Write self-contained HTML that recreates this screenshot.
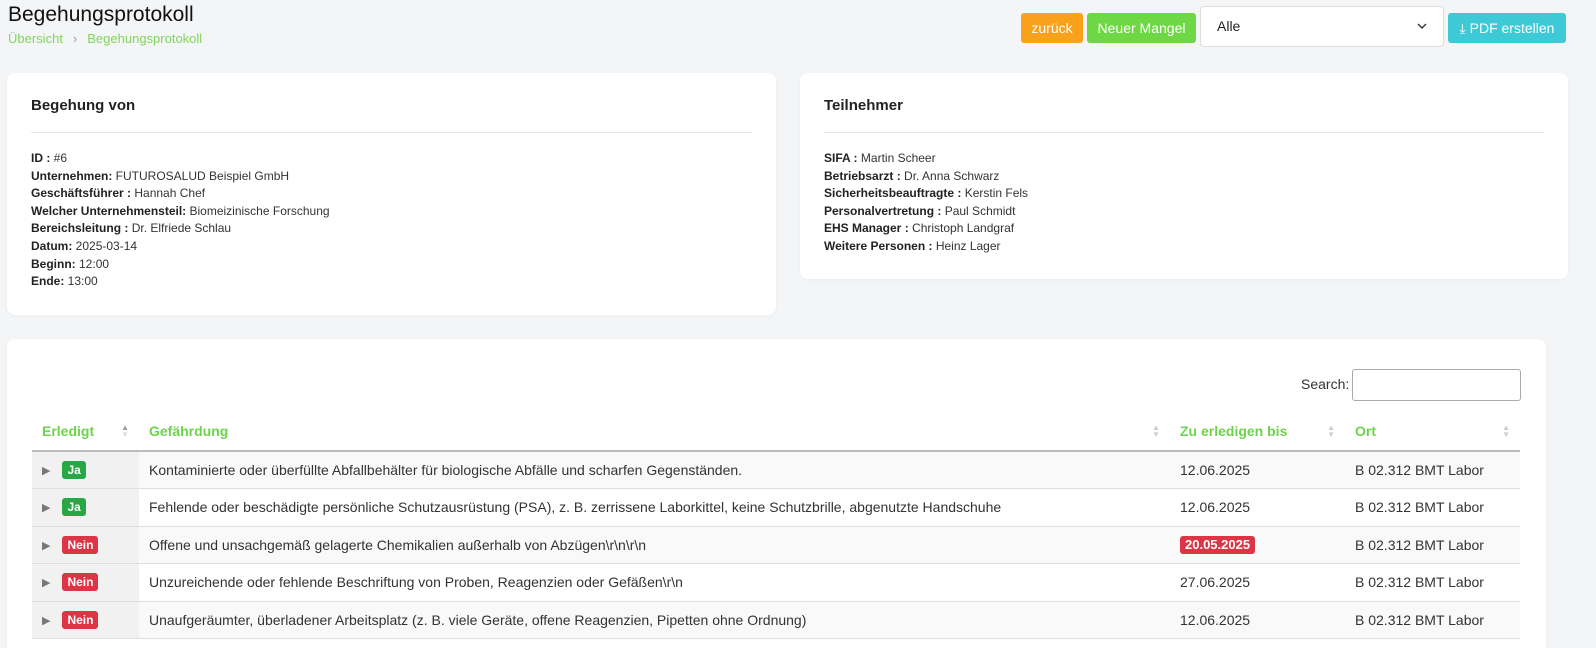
<!DOCTYPE html>
<html style="overflow:hidden"><head><meta charset="utf-8"><style>
*{box-sizing:border-box}
html,body{overflow:hidden}
body{margin:0;width:1596px;height:648px;background:#f4f5f7;font-family:"Liberation Sans",sans-serif;color:#333;position:relative}
.abs{position:absolute}
h1{position:absolute;left:8px;top:3px;margin:0;font-size:21px;font-weight:normal;color:#111}
.bc{left:8px;top:31px;font-size:13px;color:#7fd65a}
.bc span{color:#999;margin:0 10px}
.btn{position:absolute;top:13px;height:30px;border-radius:3px;color:#fff;font-size:14px;line-height:30px;text-align:center}
.card{position:absolute;background:#fff;border-radius:8px;box-shadow:0 1px 4px rgba(0,0,0,.04)}
.ct{position:absolute;left:24px;top:24px;font-size:15px;font-weight:bold;color:#222}
.hr{position:absolute;left:24px;right:24px;top:59px;border-top:1px solid #e8e8e8}
.lines{position:absolute;left:24px;top:77px;font-size:12px;line-height:17.6px;color:#333}
.lines b{color:#222}
table{position:absolute;left:32px;top:412px;width:1488px;border-collapse:collapse;font-size:14px}
th{color:#6cd44a;text-align:left;height:39px;padding:0 10px;border-bottom:2px solid #bbb;position:relative;font-size:14px}
th i{position:absolute;right:10px;top:12px;font-style:normal;font-size:8px;line-height:7px;color:#ccc}
td{height:37.5px;padding:0 10px;border-bottom:1px solid #ddd;color:#333}
tr.o td{background:#f9f9f9}
td.s{background:#f1f1f1!important;color:#777;font-size:11px}
.b{display:inline-block;color:#fff;font-weight:bold;font-size:12px;border-radius:3px;padding:2px 5px;margin-left:12px;line-height:14px}
.g{background:#28a745}.r{background:#dc3545}
</style></head><body>
<h1>Begehungsprotokoll</h1>
<div class="abs bc">Übersicht<span>›</span>Begehungsprotokoll</div>
<div class="btn" style="left:1021px;width:62px;background:#f9a11b">zurück</div>
<div class="btn" style="left:1087px;width:109px;background:#6dd744">Neuer Mangel</div>
<div class="abs" style="left:1200px;top:6px;width:244px;height:41px;background:#fff;border:1px solid #ddd;border-radius:4px;font-size:14px;line-height:39px;padding-left:16px;color:#222">Alle<svg class="abs" style="right:16px;top:16px" width="10" height="7" viewBox="0 0 10 7"><path d="M1 1l4 4 4-4" stroke="#333" stroke-width="1.4" fill="none"/></svg></div>
<div class="btn" style="left:1448px;width:118px;background:#3ec9d6">⤓ PDF erstellen</div>

<div class="card" style="left:7px;top:73px;width:769px;height:242px">
<div class="ct">Begehung von</div><div class="hr"></div>
<div class="lines"><b>ID :</b> #6<br><b>Unternehmen:</b> FUTUROSALUD Beispiel GmbH<br><b>Geschäftsführer :</b> Hannah Chef<br><b>Welcher Unternehmensteil:</b> Biomeizinische Forschung<br><b>Bereichsleitung :</b> Dr. Elfriede Schlau<br><b>Datum:</b> 2025-03-14<br><b>Beginn:</b> 12:00<br><b>Ende:</b> 13:00</div>
</div>
<div class="card" style="left:800px;top:73px;width:768px;height:206px">
<div class="ct">Teilnehmer</div><div class="hr"></div>
<div class="lines"><b>SIFA :</b> Martin Scheer<br><b>Betriebsarzt :</b> Dr. Anna Schwarz<br><b>Sicherheitsbeauftragte :</b> Kerstin Fels<br><b>Personalvertretung :</b> Paul Schmidt<br><b>EHS Manager :</b> Christoph Landgraf<br><b>Weitere Personen :</b> Heinz Lager</div>
</div>
<div class="card" style="left:7px;top:339px;width:1539px;height:309px;border-radius:8px 8px 0 0"></div>
<div class="abs" style="left:1301px;top:376px;font-size:14px">Search:</div>
<div class="abs" style="left:1352px;top:369px;width:169px;height:32px;border:1px solid #aaa;border-radius:3px;background:#fff"></div>
<table>
<tr><th style="width:107px">Erledigt<i style="color:#999">▲<br><span style="color:#ddd">▼</span></i></th><th style="width:1031px">Gefährdung<i>▲<br>▼</i></th><th style="width:175px">Zu erledigen bis<i>▲<br>▼</i></th><th>Ort<i>▲<br>▼</i></th></tr>
<tr class="o"><td class="s">▶<span class="b g">Ja</span></td><td>Kontaminierte oder überfüllte Abfallbehälter für biologische Abfälle und scharfen Gegenständen.</td><td>12.06.2025</td><td>B 02.312 BMT Labor</td></tr>
<tr><td class="s">▶<span class="b g">Ja</span></td><td>Fehlende oder beschädigte persönliche Schutzausrüstung (PSA), z. B. zerrissene Laborkittel, keine Schutzbrille, abgenutzte Handschuhe</td><td>12.06.2025</td><td>B 02.312 BMT Labor</td></tr>
<tr class="o"><td class="s">▶<span class="b r">Nein</span></td><td>Offene und unsachgemäß gelagerte Chemikalien außerhalb von Abzügen\r\n\r\n</td><td><span class="b r" style="margin-left:0;font-size:13px">20.05.2025</span></td><td>B 02.312 BMT Labor</td></tr>
<tr><td class="s">▶<span class="b r">Nein</span></td><td>Unzureichende oder fehlende Beschriftung von Proben, Reagenzien oder Gefäßen\r\n</td><td>27.06.2025</td><td>B 02.312 BMT Labor</td></tr>
<tr class="o"><td class="s">▶<span class="b r">Nein</span></td><td>Unaufgeräumter, überladener Arbeitsplatz (z. B. viele Geräte, offene Reagenzien, Pipetten ohne Ordnung)</td><td>12.06.2025</td><td>B 02.312 BMT Labor</td></tr>
</table>
</body></html>
